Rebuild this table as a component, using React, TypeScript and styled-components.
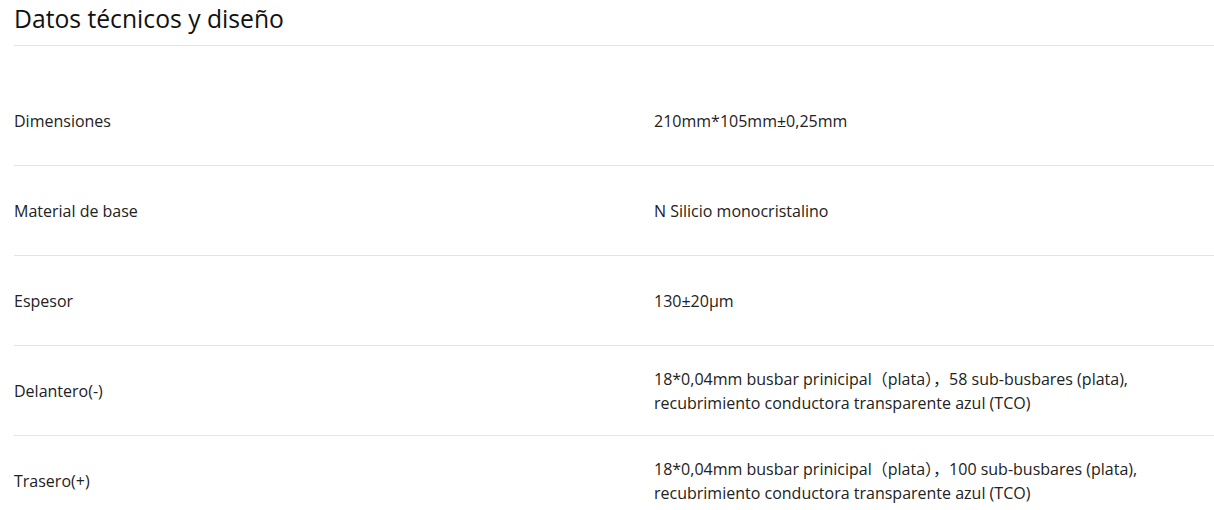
import React from "react";
import styled, { createGlobalStyle } from "styled-components";

const GlobalStyle = createGlobalStyle`
  html, body {
    margin: 0;
    padding: 0;
    background: #fff;
  }
  body {
    font-family: "Open Sans", "Noto Sans CJK SC", sans-serif;
    color: #222;
    overflow: hidden;
  }
`;

const Section = styled.section`
  padding: 0 0 0 14px;
  width: 1260px;
`;

const Heading = styled.h2`
  margin: 0;
  padding: 2px 0 9px;
  font-size: 24.7px;
  font-weight: 400;
  line-height: 34px;
  color: #111;
  border-bottom: 1px solid #e3e3e3;
`;

const Table = styled.div`
  margin-top: 30px;
  display: flex;
  flex-direction: column;
`;

const Row = styled.div`
  box-sizing: border-box;
  display: grid;
  grid-template-columns: 640px 1fr;
  align-items: center;
  height: 90px;
  border-bottom: 1px solid #e3e3e3;
  font-size: 16px;
  line-height: 24px;
`;

const Label = styled.div`
  color: #222;
`;

const Value = styled.div`
  color: #222;
`;

const Wide = styled.span`
  font-family: "Noto Sans CJK SC", sans-serif;
`;

const rows: { label: string; value: React.ReactNode }[] = [
  { label: "Dimensiones", value: "210mm*105mm±0,25mm" },
  { label: "Material de base", value: "N Silicio monocristalino" },
  { label: "Espesor", value: "130±20μm" },
  {
    label: "Delantero(-)",
    value: (
      <>
        18*0,04mm busbar prinicipal<Wide>（</Wide>plata<Wide>）</Wide>
        <Wide>，</Wide>58 sub-busbares (plata),
        <br />
        recubrimiento conductora transparente azul (TCO)
      </>
    ),
  },
  {
    label: "Trasero(+)",
    value: (
      <>
        18*0,04mm busbar prinicipal<Wide>（</Wide>plata<Wide>）</Wide>
        <Wide>，</Wide>100 sub-busbares (plata),
        <br />
        recubrimiento conductora transparente azul (TCO)
      </>
    ),
  },
];

export default function App() {
  return (
    <>
      <GlobalStyle />
      <Section>
        <Heading>Datos técnicos y diseño</Heading>
        <Table>
          {rows.map((r) => (
            <Row key={r.label}>
              <Label>{r.label}</Label>
              <Value>{r.value}</Value>
            </Row>
          ))}
        </Table>
      </Section>
    </>
  );
}
